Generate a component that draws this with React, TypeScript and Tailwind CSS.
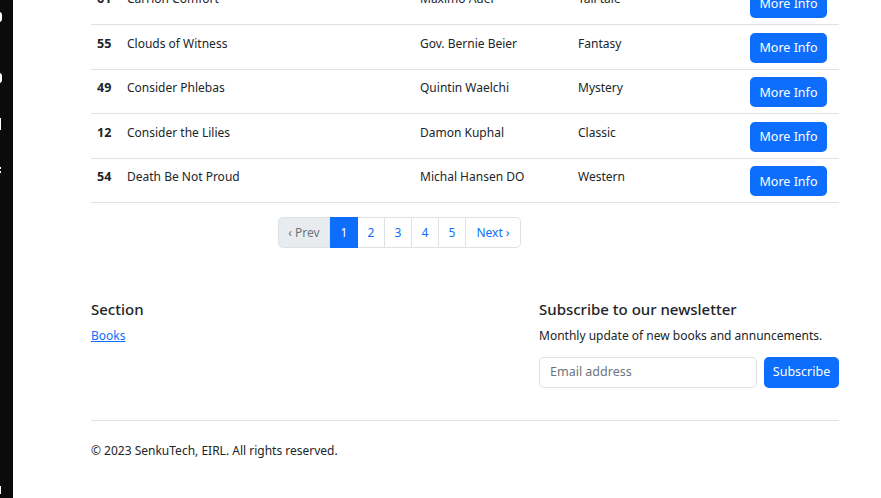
import React from "react";

const rows = [
  { id: 61, title: "Carrion Comfort", author: "Maximo Auer", genre: "Tall tale" },
  { id: 55, title: "Clouds of Witness", author: "Gov. Bernie Beier", genre: "Fantasy" },
  { id: 49, title: "Consider Phlebas", author: "Quintin Waelchi", genre: "Mystery" },
  { id: 12, title: "Consider the Lilies", author: "Damon Kuphal", genre: "Classic" },
  { id: 54, title: "Death Be Not Proud", author: "Michal Hansen DO", genre: "Western" },
];

export default function App() {
  return (
    <div
      className="flex w-[881px] h-[498px] overflow-hidden bg-white text-[#212529]"
      style={{ fontFamily: '"Noto Sans", "Open Sans", sans-serif' }}
    >
      <div className="w-[13px] shrink-0 bg-[#0b0b0b] relative overflow-hidden">
        <div className="absolute left-[-4px] top-[12px] w-[6px] h-[10px] rounded-full border-2 border-white" />
        <div className="absolute left-[-4px] top-[73px] w-[6px] h-[10px] rounded-full border-2 border-white" />
        <div className="absolute left-[-3px] top-[118px] w-[4px] h-[12px] bg-white" />
        <div className="absolute left-[-1px] top-[167px] w-[2px] h-[2px] bg-white" />
        <div className="absolute left-[-1px] top-[171px] w-[2px] h-[2px] bg-white" />
        <div className="absolute left-[-3px] top-[486px] w-[4px] h-[8px] border-r-2 border-white" />
      </div>
      <div className="flex-1 pl-[78px] pr-[42px]">
        <div className="mt-[-19.5px] text-[12px] leading-[21px]">
          {rows.map((r) => (
            <div
              key={r.id}
              className="grid grid-cols-[30px_293px_158px_172px_1fr] border-b border-[#dee2e6] h-[44.5px]"
            >
              <div className="pl-[6px] pt-[7.5px] font-bold text-[12.5px]">{r.id}</div>
              <div className="pl-[6px] pt-[7.5px]">{r.title}</div>
              <div className="pl-[6px] pt-[7.5px]">{r.author}</div>
              <div className="pl-[6px] pt-[7.5px]">{r.genre}</div>
              <div className="pl-[6px] pt-[7.5px]">
                <button className="w-[77px] h-[30px] rounded-[5px] bg-[#0d6efd] text-white text-[12.5px]">
                  More Info
                </button>
              </div>
            </div>
          ))}
        </div>

        <div className="mt-[14px] ml-[187px] flex text-[12px] h-[31px]">
          <span className="flex items-center justify-center w-[52px] border border-[#dee2e6] rounded-l-[5px] bg-[#e9ecef] text-[#6c757d]">
            ‹ Prev
          </span>
          <span className="flex items-center justify-center w-[28px] bg-[#0d6efd] border border-[#0d6efd] text-white">
            1
          </span>
          {[2, 3, 4, 5].map((n) => (
            <span
              key={n}
              className="flex items-center justify-center w-[27px] border border-l-0 border-[#dee2e6] text-[#0d6efd]"
            >
              {n}
            </span>
          ))}
          <span className="flex items-center justify-center w-[55px] border border-l-0 border-[#dee2e6] rounded-r-[5px] text-[#0d6efd]">
            Next ›
          </span>
        </div>

        <div className="mt-[51px] grid grid-cols-[448px_1fr]">
          <div>
            <div className="text-[15px] font-medium leading-[20px]">Section</div>
            <a href="#" className="block mt-[7px] text-[12px] leading-[20px] text-[#0d6efd] underline">
              Books
            </a>
          </div>
          <div>
            <div className="text-[15px] font-medium leading-[20px]">Subscribe to our newsletter</div>
            <div className="mt-[7px] text-[12px] leading-[20px] whitespace-nowrap">
              Monthly update of new books and annuncements.
            </div>
            <div className="mt-[11px] flex gap-[7px]">
              <div className="w-[218px] h-[31px] border border-[#dee2e6] rounded-[5px] flex items-center px-[10px] text-[12.5px] text-[#6c757d]">
                Email address
              </div>
              <button className="w-[75px] h-[31px] rounded-[5px] bg-[#0d6efd] text-white text-[12.5px]">
                Subscribe
              </button>
            </div>
          </div>
        </div>

        <div className="mt-[32px] border-t border-[#dee2e6] pt-[20px] text-[12px] leading-[20px]">
          © 2023 SenkuTech, EIRL. All rights reserved.
        </div>
      </div>
    </div>
  );
}
